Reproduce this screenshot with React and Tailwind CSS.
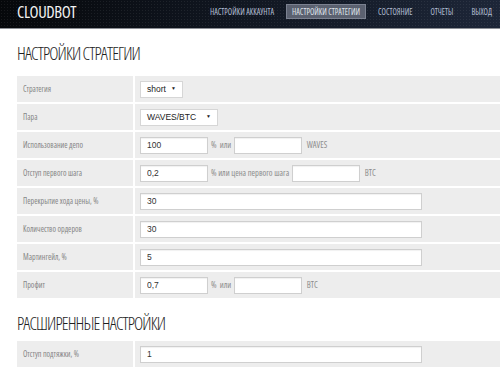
import React from 'react';

const cond = "[font-family:'Open_Sans','Liberation_Sans_Narrow',sans-serif] font-stretch-condensed";
const arial = "[font-family:'Liberation_Sans',Arial,sans-serif]";

const Field = ({ value = '', w = 'w-[68px]' }) => (
  <input
    readOnly
    value={value}
    className={`${w} h-[17px] bg-white border border-[#cfcfcf] shadow-[inset_0_1px_1px_rgba(0,0,0,0.06)] px-[6px] text-[8.5px] text-[#333] ${arial} outline-none`}
  />
);

const Select = ({ value, w }) => (
  <div className={`${w} h-[17px] bg-white border border-[#d6d6d6] flex items-center justify-between px-[6px] text-[8.5px] text-[#222] ${arial}`}>
    <span>{value}</span>
    <span className="text-[5px]">▼</span>
  </div>
);

const Note = ({ children }) => (
  <span className={`${cond} text-[8.5px] text-[#8c8c8c] whitespace-nowrap`}>{children}</span>
);

const Row = ({ label, children }) => (
  <div className="flex h-[28px] border-t-2 border-white bg-[#ededed]">
    <div className={`w-[118px] shrink-0 border-r-2 border-white pl-[6px] flex items-center ${cond} text-[8px] text-[#858585]`}>
      {label}
    </div>
    <div className="flex items-center gap-[3px] pl-[5px]">{children}</div>
  </div>
);

const Title = ({ children, className = '' }) => (
  <h1 className={`${cond} font-[350] text-[17.5px] leading-[24px] tracking-[-0.9px] text-[#1e1e1e] ${className}`}>{children}</h1>
);

const nav = ['НАСТРОЙКИ АККАУНТА', 'НАСТРОЙКИ СТРАТЕГИИ', 'СОСТОЯНИЕ', 'ОТЧЕТЫ', 'ВЫХОД'];

export default function App() {
  return (
    <div className="w-[500px] h-[375px] overflow-hidden bg-white">
      <header className="h-[29px] border-b border-[#8d9096] flex items-start justify-between pl-[17px] pr-[2px] [background-image:radial-gradient(circle,rgba(255,255,255,0.07)_0.8px,transparent_1px),linear-gradient(to_right,#06080b,#111722_50%,#1d2638)] [background-size:3px_3px,100%_100%]">
        <div className={`${cond} text-[16.5px] leading-[24px] text-[#f2f2f2] tracking-[-0.4px]`}>CLOUDBOT</div>
        <nav className="flex items-center gap-[6px] pt-[4px]">
          {nav.map((n) => (
            <span
              key={n}
              className={`${cond} text-[8px] leading-[13px] px-[5px] ${
                n === 'НАСТРОЙКИ СТРАТЕГИИ'
                  ? 'bg-[#5b6170] border border-[#7b8190] text-[#dfe3ea]'
                  : 'border border-transparent text-[#b3bfd3]'
              }`}
            >
              {n}
            </span>
          ))}
        </nav>
      </header>

      <main className="pl-[17px]">
        <Title className="mt-[12px]">НАСТРОЙКИ СТРАТЕГИИ</Title>
        <div className="mt-[9px]">
          <Row label="Стратегия">
            <Select value="short" w="w-[43px]" />
          </Row>
          <Row label="Пара">
            <Select value="WAVES/BTC" w="w-[78px]" />
          </Row>
          <Row label="Использование депо">
            <Field value="100" />
            <Note>% &nbsp;или</Note>
            <Field />
            <Note>&nbsp;WAVES</Note>
          </Row>
          <Row label="Отступ первого шага">
            <Field value="0,2" />
            <Note>% или цена первого шага</Note>
            <Field />
            <Note>&nbsp;BTC</Note>
          </Row>
          <Row label="Перекрытие хода цены, %">
            <Field value="30" w="w-[282px]" />
          </Row>
          <Row label="Количество ордеров">
            <Field value="30" w="w-[282px]" />
          </Row>
          <Row label="Мартингейл, %">
            <Field value="5" w="w-[282px]" />
          </Row>
          <Row label="Профит">
            <Field value="0,7" />
            <Note>% &nbsp;или</Note>
            <Field />
            <Note>&nbsp;BTC</Note>
          </Row>
        </div>

        <Title className="mt-[13px]">РАСШИРЕННЫЕ НАСТРОЙКИ</Title>
        <div className="mt-[4px]">
          <Row label="Отступ подтяжки, %">
            <Field value="1" w="w-[282px]" />
          </Row>
        </div>
      </main>
    </div>
  );
}
